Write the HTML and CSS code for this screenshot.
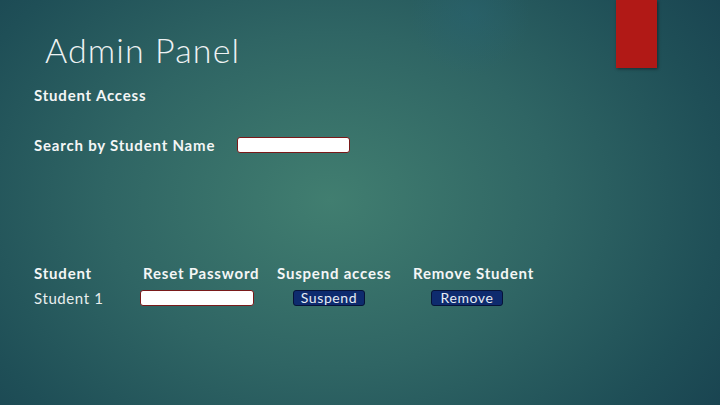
FILE: index.html
```html
<!DOCTYPE html>
<html>
<head>
<meta charset="utf-8">
<link rel="stylesheet" href="styles.css">
</head>
<body>
<div class="slide">
  <div class="tab"></div>
  <h1 class="title">Admin Panel</h1>
  <div class="label section">Student Access</div>
  <div class="search">
    <span class="label">Search by Student Name</span>
    <span class="field search-field"></span>
  </div>
  <div class="table">
    <div class="label th">Student</div>
    <div class="label th th2">Reset Password</div>
    <div class="label th">Suspend access</div>
    <div class="label th">Remove Student</div>
    <div class="td name">Student 1</div>
    <div class="td"><span class="field pw-field"></span></div>
    <div class="td"><span class="btn suspend">Suspend</span></div>
    <div class="td"><span class="btn remove">Remove</span></div>
  </div>
</div>
</body>
</html>
```
FILE: styles.css
```css
html, body {
  margin: 0;
  padding: 0;
}
body {
  width: 720px;
  height: 405px;
  overflow: hidden;
  font-family: "Lato", "Open Sans", sans-serif;
  color: #f2f5f5;
}
.slide {
  position: relative;
  width: 720px;
  height: 405px;
  box-sizing: border-box;
  padding: 30px 0 0 34px;
  background:
    radial-gradient(circle at 470px 15px, rgba(40,100,115,0.45) 0, rgba(40,100,115,0) 60px),
    radial-gradient(ellipse 560px 420px at 330px 200px, #417e70 0%, #2f6564 40%, #1f4f57 70%, #143a4b 100%);
  display: flex;
  flex-direction: column;
}
.tab {
  position: absolute;
  left: 616px;
  top: 0;
  width: 41px;
  height: 68px;
  background: #b11916;
  box-shadow: 1px 1px 3px rgba(0,0,0,0.45);
}
.title {
  margin: 0 0 0 11px;
  font-weight: 300;
  font-size: 34px;
  line-height: 40px;
  color: #eef2f3;
  letter-spacing: 1.1px;
}
.label {
  font-weight: 700;
  font-size: 15px;
  letter-spacing: 0.8px;
  color: #f4f6f6;
  white-space: nowrap;
}
.section {
  margin-top: 16px;
  line-height: 18px;
}
.search {
  margin-top: 32px;
  display: flex;
  align-items: center;
  gap: 22px;
  height: 18px;
}
.field {
  display: block;
  background: #ffffff;
  border: 1px solid #7a1a1a;
  border-radius: 3px;
  box-sizing: border-box;
  height: 16px;
}
.search-field {
  width: 113px;
}
.table {
  margin-top: 110px;
  display: grid;
  grid-template-columns: 106px 137px 136px 150px;
  grid-template-rows: 18px 18px;
  row-gap: 7px;
  align-items: center;
}
.th2 {
  padding-left: 3px;
}
.td {
  display: flex;
  align-items: center;
}
.name {
  font-size: 15px;
  font-weight: 400;
  letter-spacing: 0.6px;
  color: #e8eeee;
}
.pw-field {
  width: 114px;
}
.btn {
  display: block;
  box-sizing: border-box;
  width: 72px;
  height: 16px;
  background: #0e2b6e;
  border: 1px solid #061338;
  border-radius: 3px;
  color: #e6ecf4;
  font-size: 14px;
  letter-spacing: 0.6px;
  line-height: 14px;
  text-align: center;
}
.suspend {
  margin-left: 16px;
}
.remove {
  margin-left: 18px;
}
```
